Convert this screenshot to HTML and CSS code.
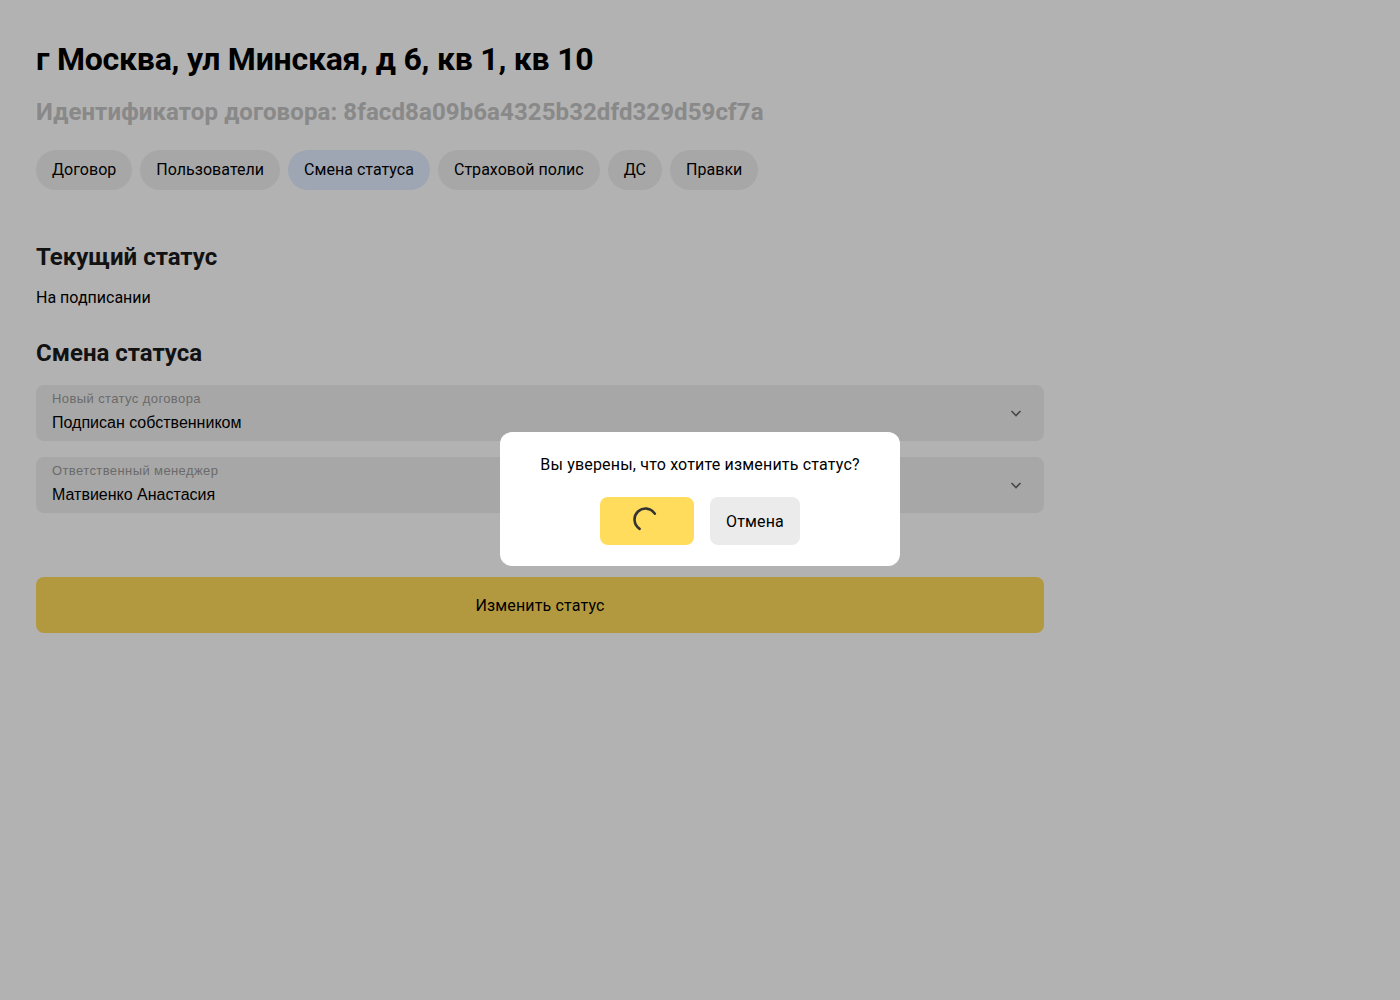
FILE: index.html
```html
<!DOCTYPE html>
<html lang="ru">
<head>
<meta charset="utf-8">
<link rel="stylesheet" href="styles.css">
</head>
<body>
<main class="page">
  <h1 class="title">г Москва, ул Минская, д 6, кв 1, кв 10</h1>
  <h2 class="subtitle">Идентификатор договора: 8facd8a09b6a4325b32dfd329d59cf7a</h2>
  <nav class="tabs">
    <span class="tab">Договор</span>
    <span class="tab">Пользователи</span>
    <span class="tab tab-active">Смена статуса</span>
    <span class="tab">Страховой полис</span>
    <span class="tab">ДС</span>
    <span class="tab">Правки</span>
  </nav>
  <section class="block">
    <h3 class="section-title">Текущий статус</h3>
    <p class="status">На подписании</p>
  </section>
  <section class="block block-change">
    <h3 class="section-title">Смена статуса</h3>
    <div class="form">
      <div class="select">
        <div class="select-body">
          <span class="select-label">Новый статус договора</span>
          <span class="select-value">Подписан собственником</span>
        </div>
        <svg class="chevron" width="16" height="16" viewBox="0 0 16 16"><path d="M3.5 6 L8 10.5 L12.5 6" fill="none" stroke="#666" stroke-width="1.6"/></svg>
      </div>
      <div class="select">
        <div class="select-body">
          <span class="select-label">Ответственный менеджер</span>
          <span class="select-value">Матвиенко Анастасия</span>
        </div>
        <svg class="chevron" width="16" height="16" viewBox="0 0 16 16"><path d="M3.5 6 L8 10.5 L12.5 6" fill="none" stroke="#666" stroke-width="1.6"/></svg>
      </div>
      <button class="submit">Изменить статус</button>
    </div>
  </section>
</main>
<div class="overlay">
  <div class="modal">
    <p class="modal-text">Вы уверены, что хотите изменить статус?</p>
    <div class="modal-actions">
      <button class="btn btn-yellow"><svg class="spinner" width="28" height="28" viewBox="0 0 28 28"><path d="M6.6 21.8 A11 11 0 1 1 21.8 6.6" fill="none" stroke="#333" stroke-width="2.6" stroke-linecap="round"/></svg></button>
      <button class="btn btn-gray">Отмена</button>
    </div>
  </div>
</div>
</body>
</html>
```
FILE: styles.css
```css
* { box-sizing: border-box; }
html, body { margin: 0; padding: 0; }
body {
  background: #fff;
  font-family: Roboto, "Noto Sans", sans-serif;
  color: #000;
  min-height: 1000px;
}
.page {
  padding: 36px 36px;
  width: 1080px;
}
.title {
  margin: 0;
  font-size: 32px;
  line-height: 46px;
  font-weight: 700;
  letter-spacing: -0.22px;
}
.subtitle {
  margin: 13px 0 0;
  font-size: 24px;
  line-height: 34px;
  font-weight: 700;
  color: #c4c4c4;
  letter-spacing: 0.1px;
}
.tabs {
  display: flex;
  gap: 8px;
  margin-top: 21px;
}
.tab {
  height: 40px;
  line-height: 40px;
  padding: 0 16px;
  border-radius: 20px;
  background: #f0f0f0;
  font-size: 16px;
  letter-spacing: 0.03px;
}
.tab-active { background: #e1eeff; }
.block { margin-top: 50px; }
.block-change { margin-top: 26px; }
.section-title {
  margin: 0;
  font-size: 24px;
  line-height: 34px;
  font-weight: 700;
  color: #1a1a1a;
}
.status {
  margin: 12px 0 0;
  font-size: 16px;
  line-height: 24px;
}
.form {
  margin-top: 15px;
  width: 1008px;
  display: flex;
  flex-direction: column;
  gap: 16px;
}
.select {
  height: 56px;
  border-radius: 8px;
  background: #f0f0f0;
  display: flex;
  align-items: center;
  padding: 0 16px;
}
.select-body {
  flex: 1;
  align-self: stretch;
  display: flex;
  flex-direction: column;
  padding-top: 6px;
}
.select-label {
  font-family: "Liberation Sans", Arial, sans-serif;
  font-size: 13px;
  line-height: 16px;
  color: #999;
  letter-spacing: 0.4px;
}
.select-value {
  font-family: "Liberation Sans", Arial, sans-serif;
  font-size: 16px;
  line-height: 22px;
  margin-top: 5px;
}
.chevron { margin-right: 4px; }
.submit {
  margin-top: 48px;
  height: 56px;
  border: 0;
  border-radius: 8px;
  background: #ffdc5c;
  font-family: inherit;
  font-size: 16px;
  letter-spacing: 0.15px;
  color: #000;
}
.overlay {
  position: fixed;
  inset: 0;
  background: rgba(0, 0, 0, 0.3);
  display: flex;
  align-items: center;
  justify-content: center;
}
.modal {
  width: 400px;
  height: 134px;
  background: #fff;
  border-radius: 12px;
  padding: 21px 24px 20px;
  margin-top: -2px;
}
.modal-text {
  margin: 0;
  text-align: center;
  font-size: 16px;
  line-height: 24px;
  letter-spacing: 0.18px;
}
.modal-actions {
  margin-top: 20px;
  display: flex;
  justify-content: center;
  gap: 16px;
}
.btn {
  height: 48px;
  border: 0;
  border-radius: 8px;
  font-family: inherit;
  font-size: 16px;
  letter-spacing: 0.15px;
  color: #000;
  display: flex;
  align-items: center;
  justify-content: center;
}
.btn-yellow { width: 94px; background: #ffdc5c; }
.btn-gray { width: 90px; background: #ebebeb; }
```
